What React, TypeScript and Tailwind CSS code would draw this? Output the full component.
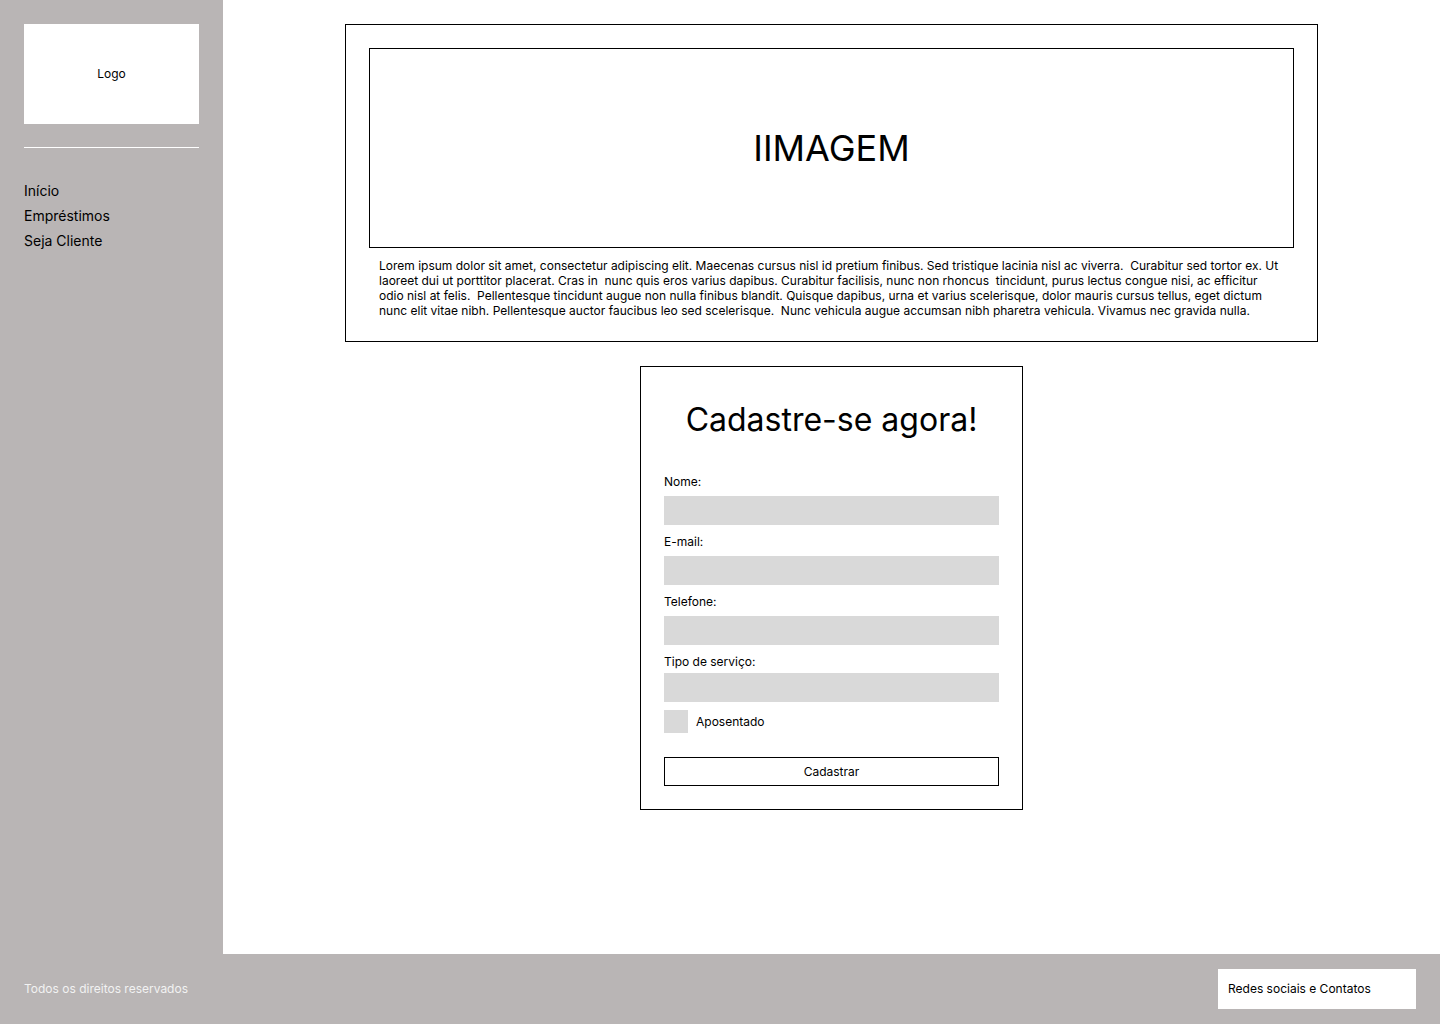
import React from "react";

const fields = ["Nome:", "E-mail:", "Telefone:"];

const loremLines = [
  "Lorem ipsum dolor sit amet, consectetur adipiscing elit. Maecenas cursus nisl id pretium finibus. Sed tristique lacinia nisl ac viverra.  Curabitur sed tortor ex. Ut",
  "laoreet dui ut porttitor placerat. Cras in  nunc quis eros varius dapibus. Curabitur facilisis, nunc non rhoncus  tincidunt, purus lectus congue nisi, ac efficitur",
  "odio nisl at felis.  Pellentesque tincidunt augue non nulla finibus blandit. Quisque dapibus, urna et varius scelerisque, dolor mauris cursus tellus, eget dictum",
  "nunc elit vitae nibh. Pellentesque auctor faucibus leo sed scelerisque.  Nunc vehicula augue accumsan nibh pharetra vehicula. Vivamus nec gravida nulla.",
];

function Sidebar() {
  return (
    <aside className="w-[223px] shrink-0 bg-[#b9b5b5] px-6 pt-6">
      <div className="flex h-[100px] w-[175px] items-center justify-center bg-white text-xs text-black">
        Logo
      </div>
      <div className="mt-[23px] h-px w-[175px] bg-white" />
      <nav className="mt-[30px] flex flex-col text-sm leading-[25px] text-black">
        <a href="#">Início</a>
        <a href="#">Empréstimos</a>
        <a href="#">Seja Cliente</a>
      </nav>
    </aside>
  );
}

function Hero() {
  return (
    <section className="w-[973px] border border-black bg-white px-[23px] pt-[23px] pb-[22px]">
      <div className="flex h-[200px] items-center justify-center border border-black">
        <span className="text-[36px] leading-none text-black">IIMAGEM</span>
      </div>
      <p className="mt-[10px] mb-px px-[10px] text-xs leading-[15px] text-black">
        {loremLines.map((line, i) => (
          <span key={i} className="block whitespace-pre">
            {line}
          </span>
        ))}
      </p>
    </section>
  );
}

function SignupForm() {
  return (
    <section className="w-[383px] border border-black bg-white px-[23px] pt-[33px] pb-[23px]">
      <h2 className="text-center text-[32px] leading-[39px] text-black">Cadastre-se agora!</h2>
      <form className="mt-[35px] flex flex-col" onSubmit={(e) => e.preventDefault()}>
        {fields.map((label) => (
          <div key={label} className="mb-[9px] flex flex-col">
            <label className="text-xs leading-[15px] text-black">{label}</label>
            <input className="mt-[7px] h-[29px] w-full bg-[#d9d9d9] outline-none" />
          </div>
        ))}
        <div className="flex flex-col">
          <label className="text-xs leading-[15px] text-black">Tipo de serviço:</label>
          <input className="mt-[4px] h-[29px] w-full bg-[#d9d9d9] outline-none" />
        </div>
        <label className="mt-[8px] flex items-center gap-2 text-xs text-black">
          <span className="h-[23px] w-6 bg-[#d9d9d9]" />
          Aposentado
        </label>
        <button
          type="submit"
          className="mt-6 h-[29px] w-full border border-black bg-white text-xs text-black"
        >
          Cadastrar
        </button>
      </form>
    </section>
  );
}

export default function App() {
  return (
    <div className="flex min-h-screen flex-col bg-white font-['Inter',sans-serif]">
      <div className="flex h-[954px]">
        <Sidebar />
        <main className="flex flex-1 flex-col items-center gap-6 pt-6">
          <Hero />
          <SignupForm />
        </main>
      </div>
      <footer className="flex h-[70px] items-center justify-between bg-[#b9b5b5] px-6">
        <span className="text-xs text-[#f2f2f2]">Todos os direitos reservados</span>
        <div className="flex h-10 w-[198px] items-center bg-white pl-[10px] text-xs text-black">
          Redes sociais e Contatos
        </div>
      </footer>
    </div>
  );
}
